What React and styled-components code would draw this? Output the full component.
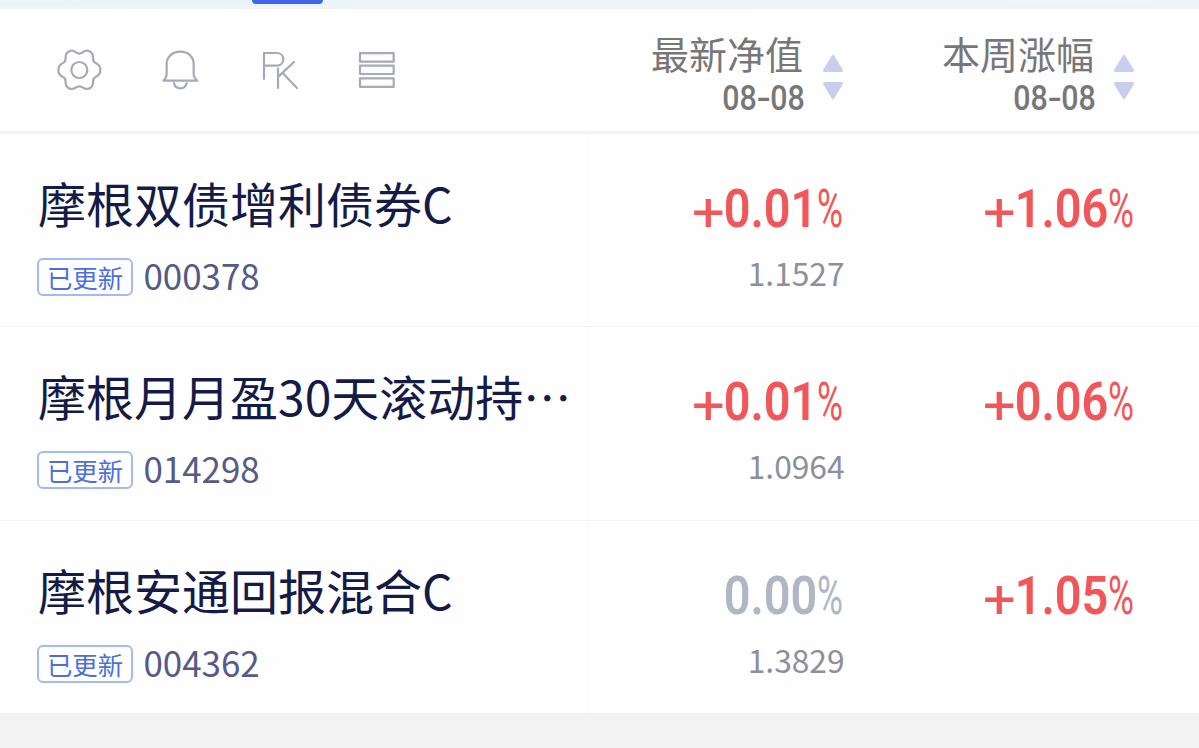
import React from 'react';
import styled, { createGlobalStyle } from 'styled-components';

const GlobalStyle = createGlobalStyle`
  * { box-sizing: border-box; }
  body {
    margin: 0;
    background: #f3f3f3;
    font-family: "Noto Sans CJK SC", "Noto Sans", sans-serif;
  }
`;

const Page = styled.main`
  width: 1199px;
  height: 748px;
  overflow: hidden;
  background: #f3f3f3;
`;

const TabStrip = styled.div`
  height: 9px;
  padding-left: 252px;
  background: linear-gradient(90deg, #e8f4f7, #edf6fb 50%, #f0f5fb);
  border-bottom: 3px solid #f0f3fa;
`;

const TabIndicator = styled.div`
  width: 71px;
  height: 4px;
  border-radius: 0 0 4px 4px;
  background: #4264e8;
`;

const columns = '588px 257px 291px';

const Header = styled.header`
  display: grid;
  grid-template-columns: ${columns};
  height: 125px;
  background: #fefefe;
  border-bottom: 3px solid #f1f3fa;
`;

const Tools = styled.div`
  display: flex;
  align-items: flex-start;
  padding: 39px 0 0 56px;
`;

const Tool = styled.button`
  display: flex;
  width: ${(p) => p.$width}px;
  padding: 0;
  border: 0;
  background: none;

  svg {
    display: block;
    fill: none;
    stroke: #a8a9b8;
    stroke-width: 6.6;
    stroke-linecap: round;
    stroke-linejoin: round;
  }
`;

const SortHead = styled.div`
  display: flex;
  justify-content: flex-end;
  align-items: flex-start;
  gap: 18px;
  padding-right: 1px;
`;

const HeadText = styled.div`
  display: flex;
  flex-direction: column;
  align-items: flex-end;
  padding-top: 20px;
  color: #777;
`;

const HeadLabel = styled.span`
  padding-right: 1px;
  font-size: 38px;
  line-height: 48px;
`;

const HeadDate = styled.span`
  display: flex;
  justify-content: flex-end;
  margin-top: 1px;
  font: 500 34.5px/40px Roboto, sans-serif;
`;

const Segment = styled.span`
  display: flex;
  justify-content: center;
  width: ${(p) => p.$width}px;
  font-weight: ${(p) => p.$weight};
  transform: translateY(${(p) => p.$drop || 0}px) scaleX(${(p) => p.$scale});
`;

const Arrows = styled.svg`
  display: block;
  margin-top: 43px;
  fill: #c9cdee;
  stroke: #c9cdee;
  stroke-width: 3;
  stroke-linejoin: round;
`;

const Row = styled.section`
  display: grid;
  grid-template-columns: ${columns};
  height: ${(p) => p.$height}px;
  background: #fefefe;
  border-bottom: ${(p) => (p.$last ? 0 : 1)}px solid #f3f4f8;
`;

const Fund = styled.div`
  padding: 38px 0 0 37px;
  border-right: 1px solid #fbfbfd;
`;

const FundName = styled.h2`
  margin: 0;
  padding-left: 1px;
  color: #141b46;
  font-size: 48px;
  font-weight: 400;
  line-height: 60px;
  white-space: nowrap;
`;

const Meta = styled.div`
  display: flex;
  align-items: flex-start;
  gap: 10.5px;
  margin-top: 26px;
`;

const Badge = styled.span`
  display: flex;
  justify-content: center;
  width: 96px;
  height: 38px;
  border: 2px solid #a4b9ee;
  border-radius: 6px;
  color: #4d6edb;
  font-size: 25.4px;
  line-height: 34px;
`;

const Code = styled.span`
  color: #555b86;
  font-size: 34.9px;
  line-height: 35px;
`;

const Figures = styled.div`
  display: flex;
  flex-direction: column;
  align-items: flex-end;
  padding-top: 47px;
`;

const Change = styled.div`
  display: flex;
  height: 54px;
  padding-right: 2px;
  color: ${(p) => (p.$flat ? '#afb7c6' : '#f15659')};
  font: 54.5px/54px Roboto, sans-serif;
`;

const NetValue = styled.span`
  margin-top: 17px;
  padding-right: 0.5px;
  color: #8d909b;
  font-size: 31.7px;
  line-height: 40px;
`;

function Percent({ value }) {
  const signed = value.startsWith('+');
  const digits = value.replace('+', '').replace('%', '');
  return (
    <Change $flat={!signed}>
      {signed && <Segment $width={31} $weight={400} $scale={1.06} $drop={4}>+</Segment>}
      <Segment $width={93} $weight={600} $scale={0.86}>{digits}</Segment>
      <Segment $width={26} $weight={400} $scale={0.65}>%</Segment>
    </Change>
  );
}

function SortColumn({ label }) {
  return (
    <SortHead>
      <HeadText>
        <HeadLabel>{label}</HeadLabel>
        <HeadDate>
          <Segment $width={33} $weight={500} $scale={0.88}>08</Segment>
          <Segment $width={15.5} $weight={500} $scale={1.2}>-</Segment>
          <Segment $width={33} $weight={500} $scale={0.88}>08</Segment>
        </HeadDate>
      </HeadText>
      <Arrows width="22" height="50" viewBox="0 0 22 50">
        <path d="M11 4.500 L19.500 18.500 H2.500 Z" />
        <path d="M11 45.500 L19.500 31.500 H2.500 Z" />
      </Arrows>
    </SortHead>
  );
}

const funds = [
  { name: '摩根双债增利债券C', code: '000378', day: '+0.01%', value: '1.1527', week: '+1.06%', height: 193 },
  { name: '摩根月月盈30天滚动持…', code: '014298', day: '+0.01%', value: '1.0964', week: '+0.06%', height: 194 },
  { name: '摩根安通回报混合C', code: '004362', day: '0.00%', value: '1.3829', week: '+1.05%', height: 192 },
];

export default function App() {
  return (
    <Page lang="zh-CN">
      <GlobalStyle />
      <TabStrip><TabIndicator /></TabStrip>
      <Header>
        <Tools>
          <Tool $width={104} aria-label="设置">
            <svg width="47" height="44" viewBox="168 144 141 132">
              <path d="M238 161C248 161 250 152 260 152C270 152 279 160 279 170C279 180 279 186 287 189C296 193 301 200 301 210C301 220 296 227 287 231C279 234 279 240 279 250C279 260 270 267 260 267C250 267 248 259 238 259C228 259 226 267 216 267C206 267 197 260 197 250C197 240 197 234 189 231C180 227 175 220 175 210C175 200 180 193 189 189C197 186 197 180 197 170C197 160 206 152 216 152C226 152 228 161 238 161Z" />
              <circle cx="238" cy="210" r="24" />
            </svg>
          </Tool>
          <Tool $width={100} aria-label="提醒">
            <svg width="40" height="44" viewBox="480 144 120 132">
              <path d="M490 242C498 236 500 228 500 220V192C500 170 518 155 541 155S581 170 581 192V220C581 228 584 236 592 242Z" />
              <path d="M522 249C524 259 532 265 541 265S558 259 560 249" />
            </svg>
          </Tool>
          <Tool $width={98} aria-label="对比">
            <svg width="40" height="44" viewBox="781 144 120 132">
              <path d="M793 237V159H830C858 159 858 197 830 197H793" />
              <path d="M835 206V264M883 186L836 230M849 219L892 264" />
            </svg>
          </Tool>
          <Tool $width={40} aria-label="列表">
            <svg width="40" height="44" viewBox="1074 144 120 132">
              <path d="M1080 159.500H1181V185H1080ZM1080 197H1181V222H1080ZM1080 235H1181V260.500H1080Z" />
            </svg>
          </Tool>
        </Tools>
        <SortColumn label="最新净值" />
        <SortColumn label="本周涨幅" />
      </Header>
      {funds.map((f, i) => (
        <Row key={f.code} $height={f.height} $last={i === funds.length - 1}>
          <Fund>
            <FundName>{f.name}</FundName>
            <Meta>
              <Badge>已更新</Badge>
              <Code>{f.code}</Code>
            </Meta>
          </Fund>
          <Figures>
            <Percent value={f.day} />
            <NetValue>{f.value}</NetValue>
          </Figures>
          <Figures>
            <Percent value={f.week} />
          </Figures>
        </Row>
      ))}
    </Page>
  );
}
